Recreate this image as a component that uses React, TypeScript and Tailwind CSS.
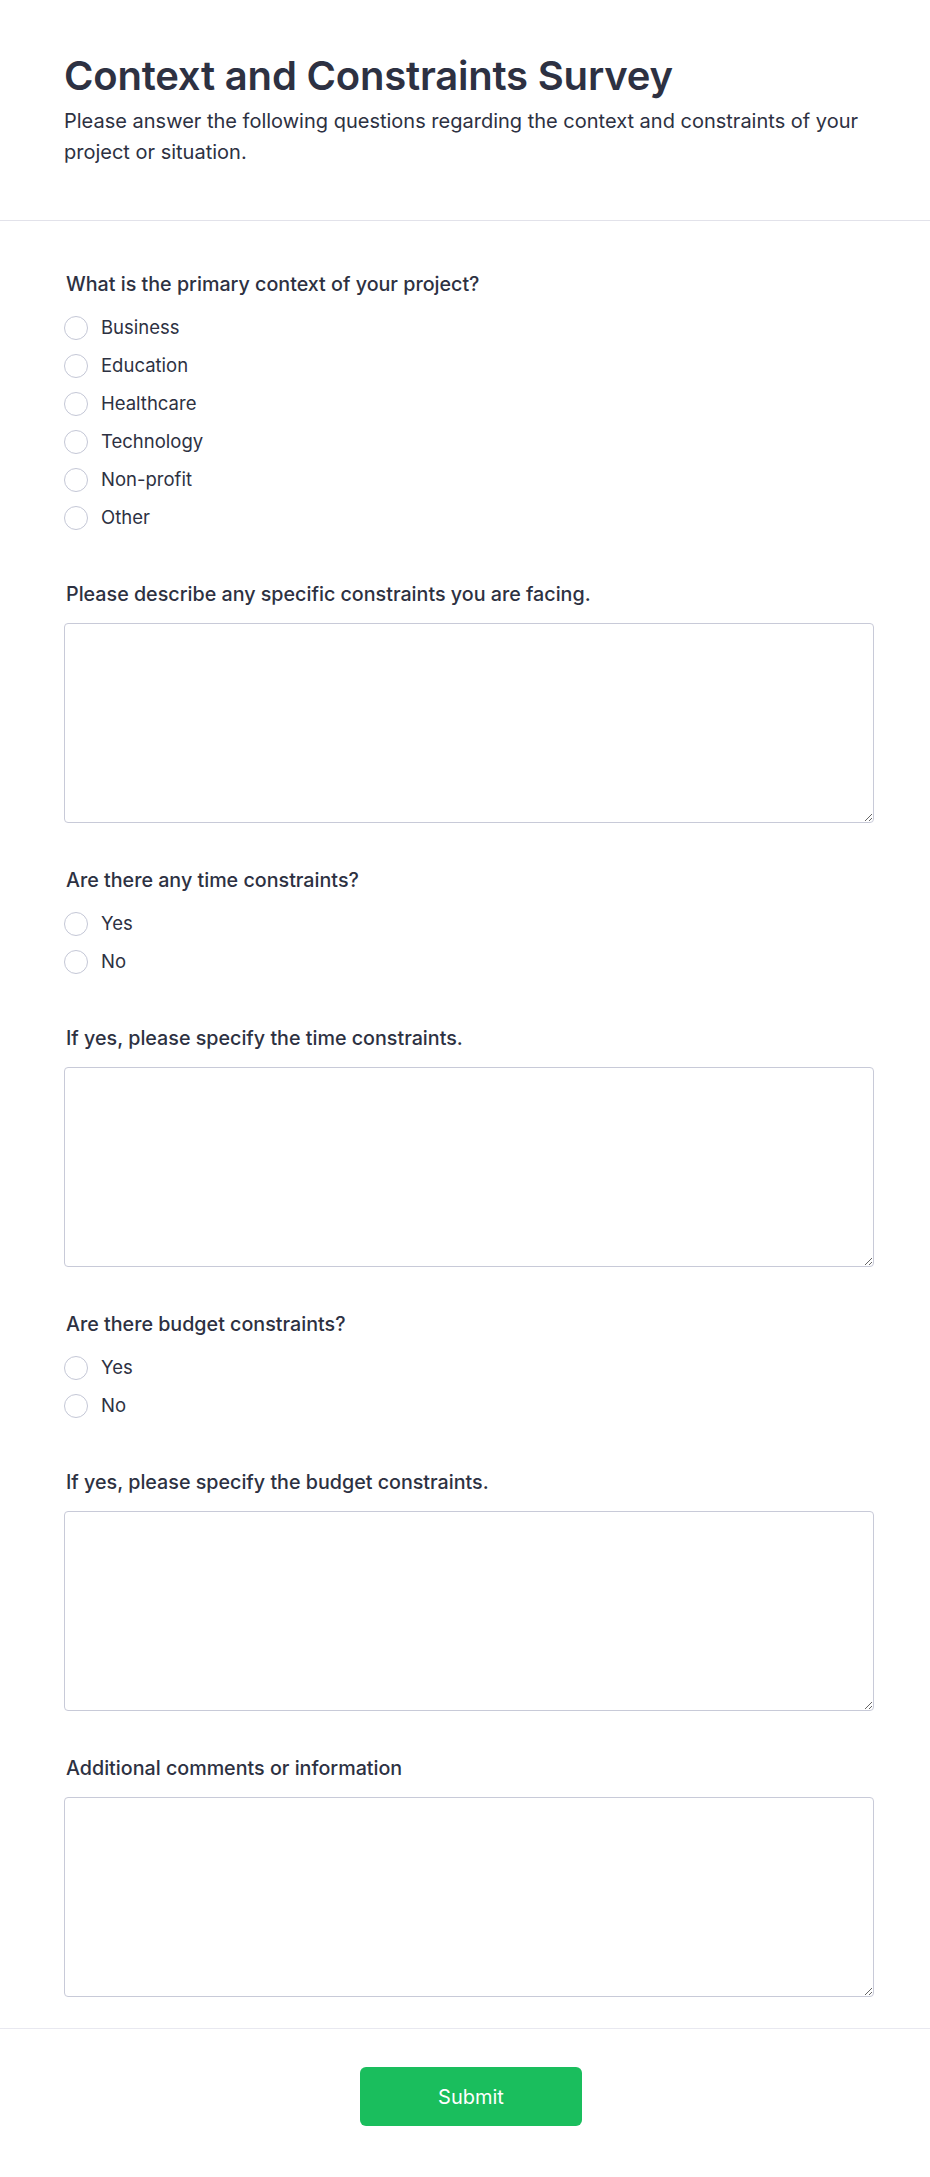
import React from 'react';

type Question =
  | { id: string; kind: 'radio'; label: string; options: string[] }
  | { id: string; kind: 'text'; label: string };

const questions: Question[] = [
  {
    id: 'context',
    kind: 'radio',
    label: 'What is the primary context of your project?',
    options: ['Business', 'Education', 'Healthcare', 'Technology', 'Non-profit', 'Other'],
  },
  { id: 'constraints', kind: 'text', label: 'Please describe any specific constraints you are facing.' },
  { id: 'time', kind: 'radio', label: 'Are there any time constraints?', options: ['Yes', 'No'] },
  { id: 'timeDetails', kind: 'text', label: 'If yes, please specify the time constraints.' },
  { id: 'budget', kind: 'radio', label: 'Are there budget constraints?', options: ['Yes', 'No'] },
  { id: 'budgetDetails', kind: 'text', label: 'If yes, please specify the budget constraints.' },
  { id: 'comments', kind: 'text', label: 'Additional comments or information' },
];

const App: React.FC = () => {
  return (
    <div className="min-h-[2177px] bg-white text-[#2d3142] font-['Inter',sans-serif]">
      {/* Header */}
      <header className="pl-16 pr-14 pt-[52px] pb-[52px] border-b border-[#e2e2ea]">
        <h1 className="text-[40px] leading-[48px] font-semibold tracking-[-0.2px]">Context and Constraints Survey</h1>
        <p className="mt-1.5 text-[20px] leading-[31px]">
          Please answer the following questions regarding the context and constraints of your project or situation.
        </p>
      </header>

      {/* Questions */}
      <main className="pl-16 pr-14 pt-[51px] pb-[31px] flex flex-col gap-[45px]">
        {questions.map(q => (
          <div key={q.id}>
            <label className="block ml-0.5 text-[19.7px] leading-6 font-medium">{q.label}</label>
            {q.kind === 'radio' ? (
              <div className="mt-[13px] flex flex-col">
                {q.options.map(opt => (
                  <label key={opt} className="h-[38px] flex items-center gap-[13px] text-[18.5px]">
                    <input
                      type="radio"
                      name={q.id}
                      className="appearance-none w-6 h-6 rounded-full border-[1.5px] border-[#c4c7d6] bg-white"
                    />
                    <span>{opt}</span>
                  </label>
                ))}
              </div>
            ) : (
              <textarea className="mt-[17px] block w-full h-[200px] rounded border border-[#c8cad8] bg-white" />
            )}
          </div>
        ))}
      </main>

      {/* Footer */}
      <footer className="border-t border-[#e8e8f0] pt-[38px] pb-[50px] pl-3 flex justify-center">
        <button className="w-[222px] h-[59px] rounded-md bg-[#1abe5d] text-white text-[20px]">Submit</button>
      </footer>
    </div>
  );
};

export default App;
